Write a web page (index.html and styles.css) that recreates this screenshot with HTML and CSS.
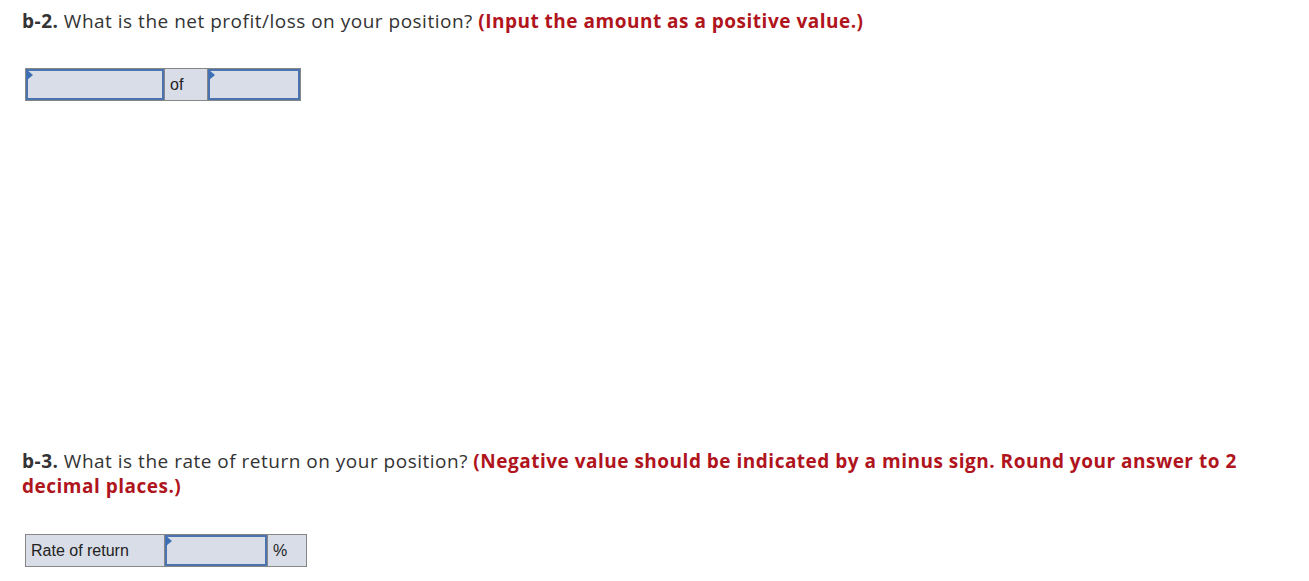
FILE: index.html
```html
<!DOCTYPE html>
<html lang="en">
<head>
  <meta charset="UTF-8" />
  <title>Question b-2, b-3</title>
  <link rel="stylesheet" href="styles.css">
</head>
<body>
  <div class="part part-b2">
    <p class="question"><b>b-2.</b> What is the net profit/loss on your position? <span class="hint">(Input the amount as a positive value.)</span></p>
    <div class="answer">
      <div class="field w-amount"><span class="flag"></span></div>
      <div class="label w-of">of</div>
      <div class="field w-total"><span class="flag"></span></div>
    </div>
  </div>

  <div class="part part-b3">
    <p class="question"><b>b-3.</b> What is the rate of return on your position? <span class="hint">(Negative value should be indicated by a minus sign. Round your answer to 2 decimal places.)</span></p>
    <div class="answer">
      <div class="label w-name">Rate of return</div>
      <div class="field w-rate"><span class="flag"></span></div>
      <div class="label w-unit">%</div>
    </div>
  </div>
</body>
</html>
```
FILE: styles.css
```css
body { margin: 0; background: #fff; font-family: "Open Sans", sans-serif; color: #333; }
.part { padding-left: 22px; width: 1240px; }
.part-b2 { padding-top: 9px; }
.part-b3 { padding-top: 344px; }
.question { margin: 0; font-size: 19px; line-height: 25px; letter-spacing: 0.5px; }
.question b { font-weight: 700; }
.hint { color: #b0141c; font-weight: 700; }

.answer { display: inline-flex; margin: 34px 0 0 3px; border: 1px solid #868686; background: #d9dde7; font-family: "Liberation Sans", Arial, sans-serif; font-size: 16px; color: #222; }
.part-b3 .answer { margin-top: 35px; }
.field, .label { box-sizing: border-box; height: 31px; }
.label { display: flex; align-items: center; padding: 0 5px; border-left: 1px solid #868686; border-right: 1px solid #868686; }
.label:first-child { border-left: 0; }
.label:last-child { border-right: 0; }
.field { position: relative; border: 2px solid #4a73b0; }
.flag { position: absolute; left: -1px; top: -1px; width: 0; height: 0; border-top: 5px solid transparent; border-bottom: 5px solid transparent; border-left: 6px solid #3b6fb6; }

.w-amount { width: 138px; }
.w-of { width: 44px; }
.w-total { width: 92px; }
.w-name { width: 139px; }
.w-rate { width: 102px; }
.w-unit { width: 39px; }
```
